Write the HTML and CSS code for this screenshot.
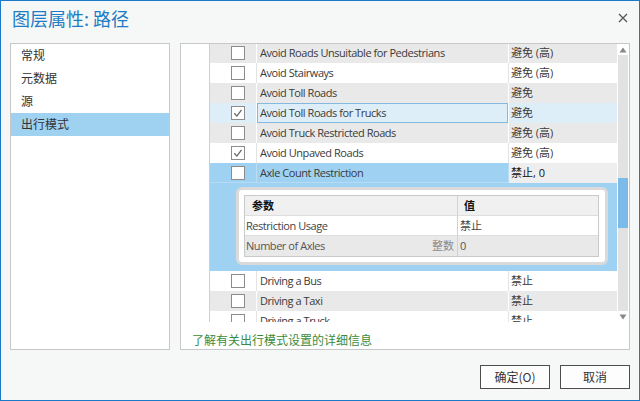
FILE: index.html
```html
<!DOCTYPE html>
<html lang="zh">
<head>
<meta charset="utf-8">
<title>图层属性: 路径</title>
<link rel="stylesheet" href="styles.css">
</head>
<body>
<div class="dialog">
  <header class="titlebar">
    <h1 class="title">图层属性: 路径</h1>
    <svg class="close" width="10" height="10" viewBox="0 0 10 10"><path d="M1 1L9 9M9 1L1 9" stroke="#555" stroke-width="1.3" fill="none"/></svg>
  </header>
  <main class="content">
    <nav class="nav">
      <div class="nav-item">常规</div>
      <div class="nav-item">元数据</div>
      <div class="nav-item">源</div>
      <div class="nav-item active">出行模式</div>
    </nav>
    <section class="panel">
      <div class="gridwrap">
        <div class="grid">
          <div class="list">
            <div class="row alt"><div class="ind"></div><div class="chk"><svg class="cb" width="14" height="14"><rect x=".5" y=".5" width="13" height="13" fill="#fff" stroke="#8c8c8c"/></svg></div><div class="name">Avoid Roads Unsuitable for Pedestrians</div><div class="val">避免 (高)</div></div>
            <div class="row"><div class="ind"></div><div class="chk"><svg class="cb" width="14" height="14"><rect x=".5" y=".5" width="13" height="13" fill="#fff" stroke="#8c8c8c"/></svg></div><div class="name">Avoid Stairways</div><div class="val">避免 (高)</div></div>
            <div class="row alt"><div class="ind"></div><div class="chk"><svg class="cb" width="14" height="14"><rect x=".5" y=".5" width="13" height="13" fill="#fff" stroke="#8c8c8c"/></svg></div><div class="name">Avoid Toll Roads</div><div class="val">避免</div></div>
            <div class="row sel"><div class="ind"></div><div class="chk"><svg class="cb" width="14" height="14"><rect x=".5" y=".5" width="13" height="13" fill="#fff" stroke="#8c8c8c"/><path d="M3.3 7.3l2.6 2.8 4.6-6.2" fill="none" stroke="#666" stroke-width="1.3"/></svg></div><div class="name">Avoid Toll Roads for Trucks</div><div class="val">避免</div></div>
            <div class="row alt"><div class="ind"></div><div class="chk"><svg class="cb" width="14" height="14"><rect x=".5" y=".5" width="13" height="13" fill="#fff" stroke="#8c8c8c"/></svg></div><div class="name">Avoid Truck Restricted Roads</div><div class="val">避免 (高)</div></div>
            <div class="row"><div class="ind"></div><div class="chk"><svg class="cb" width="14" height="14"><rect x=".5" y=".5" width="13" height="13" fill="#fff" stroke="#8c8c8c"/><path d="M3.3 7.3l2.6 2.8 4.6-6.2" fill="none" stroke="#666" stroke-width="1.3"/></svg></div><div class="name">Avoid Unpaved Roads</div><div class="val">避免 (高)</div></div>
            <div class="row act"><div class="ind"></div><div class="chk"><svg class="cb" width="14" height="14"><rect x=".5" y=".5" width="13" height="13" fill="#fff" stroke="#8c8c8c"/></svg></div><div class="name">Axle Count Restriction</div><div class="val">禁止, 0</div></div>
            <div class="detail">
              <div class="ind"></div>
              <div class="detail-body">
                <div class="card">
                  <div class="ptable">
                    <div class="pc ph">参数</div><div class="pc ph pv">值</div>
                    <div class="pc pkey">Restriction Usage</div><div class="pc pv">禁止</div>
                    <div class="pc palt pkey">Number of Axles<span class="ptype">整数</span></div><div class="pc pv palt">0</div>
                  </div>
                </div>
              </div>
            </div>
            <div class="row"><div class="ind"></div><div class="chk"><svg class="cb" width="14" height="14"><rect x=".5" y=".5" width="13" height="13" fill="#fff" stroke="#8c8c8c"/></svg></div><div class="name">Driving a Bus</div><div class="val">禁止</div></div>
            <div class="row alt"><div class="ind"></div><div class="chk"><svg class="cb" width="14" height="14"><rect x=".5" y=".5" width="13" height="13" fill="#fff" stroke="#8c8c8c"/></svg></div><div class="name">Driving a Taxi</div><div class="val">禁止</div></div>
            <div class="row"><div class="ind"></div><div class="chk"><svg class="cb" width="14" height="14"><rect x=".5" y=".5" width="13" height="13" fill="#fff" stroke="#8c8c8c"/></svg></div><div class="name">Driving a Truck</div><div class="val">禁止</div></div>
          </div>
        </div>
        <div class="scrollbar">
          <div class="sb-btn"><svg width="8" height="6" viewBox="0 0 8 6"><path d="M0.5 5.5L4 0.5L7.5 5.5Z" fill="#888"/></svg></div>
          <div class="track"><div class="thumb"></div></div>
          <div class="sb-btn down"><svg width="8" height="6" viewBox="0 0 8 6"><path d="M0.5 0.5L4 5.5L7.5 0.5Z" fill="#888"/></svg></div>
        </div>
      </div>
      <a class="link">了解有关出行模式设置的详细信息</a>
    </section>
  </main>
  <footer class="footer">
    <button class="btn">确定(O)</button>
    <button class="btn">取消</button>
  </footer>
</div>
</body>
</html>
```
FILE: styles.css
```css
body {
  margin: 0;
  width: 640px;
  height: 401px;
  overflow: hidden;
  font-family: "Open Sans", "Noto Sans CJK SC", sans-serif;
}
.dialog {
  box-sizing: border-box;
  width: 640px;
  height: 401px;
  border: 1px solid #1a7ac9;
  background: #f6f8f8;
  display: flex;
  flex-direction: column;
}
.titlebar {
  height: 42px;
  display: flex;
  justify-content: space-between;
  align-items: flex-start;
  padding: 0 11px;
}
.title {
  margin: 5px 0 0;
  font: 400 18px/24px "Noto Sans CJK SC", sans-serif;
  color: #1f7cc4;
}
.close {
  margin-top: 12px;
}
.content {
  display: flex;
  gap: 10px;
  padding: 0 9px;
  height: 307px;
}
.nav {
  width: 160px;
  box-sizing: border-box;
  border: 1px solid #c8c8c8;
  background: #fff;
}
.nav-item {
  height: 23px;
  padding-left: 10px;
  font: 12px/22px "Noto Sans CJK SC", sans-serif;
  color: #333;
}
.nav-item.active {
  background: #9fd1f1;
}
.panel {
  width: 450px;
  box-sizing: border-box;
  border: 1px solid #c8c8c8;
  background: #fff;
  display: flex;
  flex-direction: column;
}
.gridwrap {
  display: flex;
  height: 278px;
}
.grid {
  width: 436px;
  overflow: hidden;
}
.list {
  margin-top: -1px;
}
.row {
  display: grid;
  grid-template-columns: 29px 47px 252px 108px;
  height: 20px;
}
.row > div {
  box-sizing: border-box;
  height: 20px;
  line-height: 19px;
  font-size: 11px;
  color: #3a3a3a;
  white-space: nowrap;
  overflow: hidden;
}
.ind {
  background: #fff;
  border-right: 1px solid #cfcfcf;
}
.row .chk {
  padding: 3px 0 0 21px;
  border-right: 1px solid #e3e3e3;
}
.cb {
  display: block;
}
.row .name {
  padding-left: 3px;
  letter-spacing: -0.45px;
  border-right: 1px solid #e3e3e3;
}
.row .val {
  padding-left: 2px;
}
.row.alt .chk,
.row.alt .name,
.row.alt .val {
  background: #e9e9e9;
  border-right-color: #fff;
}
.row.sel .chk,
.row.sel .name,
.row.sel .val {
  background: #deeef9;
  border-right-color: #fff;
}
.row.sel .name {
  box-shadow: inset 0 0 0 1px #86b9df;
}
.row.act .chk,
.row.act .name {
  background: #9fd2f2;
  border-right-color: #b8def5;
  border-bottom: 1px solid #b5dcf4;
}
.row.act .val {
  background: #eeeeee;
  color: #111;
}
.detail {
  display: grid;
  grid-template-columns: 29px 1fr;
  height: 88px;
}
.detail-body {
  background: #9fd2f2;
  padding: 4px 9px 6px 26px;
}
.card {
  box-sizing: border-box;
  height: 78px;
  border: 3px solid #dadada;
  border-radius: 6px;
  background: #fff;
  padding: 5px 6px 5px 5px;
}
.ptable {
  border: 1px solid #c9c9c9;
  display: grid;
  grid-template-columns: 212px 1fr;
}
.pc {
  box-sizing: border-box;
  height: 20px;
  line-height: 19px;
  font-size: 11px;
  color: #444;
  padding-left: 1px;
  border-bottom: 1px solid #dedede;
  white-space: nowrap;
}
.pc:nth-last-child(-n+2) {
  border-bottom: 0;
  line-height: 20px;
}
.ph {
  background: #f0f0f0;
  font-weight: 700;
  color: #111;
  padding-left: 7px;
}
.pv {
  border-left: 1px solid #d2d2d2;
  padding-left: 2px;
}
.ph.pv {
  padding-left: 6px;
}
.palt {
  background: #e9e9e9;
  color: #555;
}
.pkey {
  display: flex;
  justify-content: space-between;
  padding-right: 3px;
  letter-spacing: -0.45px;
}
.ptype {
  color: #8a8a8a;
  letter-spacing: 0;
}
.scrollbar {
  width: 12px;
  display: flex;
  flex-direction: column;
  align-items: center;
}
.sb-btn {
  width: 10px;
  height: 11px;
  display: flex;
  justify-content: center;
  padding-top: 3px;
  box-sizing: border-box;
}
.sb-btn svg {
  display: block;
}
.track {
  flex: 1;
  width: 10px;
  background: #e2e2e2;
  padding-top: 123px;
  box-sizing: border-box;
}
.thumb {
  height: 50px;
  background: #7cbbe9;
}
.link {
  margin: 9px 0 0 11px;
  font: 12px/18px "Noto Sans CJK SC", sans-serif;
  color: #3b8b3b;
}
.footer {
  display: flex;
  justify-content: flex-end;
  gap: 10px;
  padding: 15px 9px 0 0;
}
.btn {
  width: 70px;
  height: 24px;
  border: 1px solid #4d4d4d;
  background: #fdfdfd;
  font: 12px/20px "Noto Sans CJK SC", sans-serif;
  color: #333;
  padding: 0;
}
```
